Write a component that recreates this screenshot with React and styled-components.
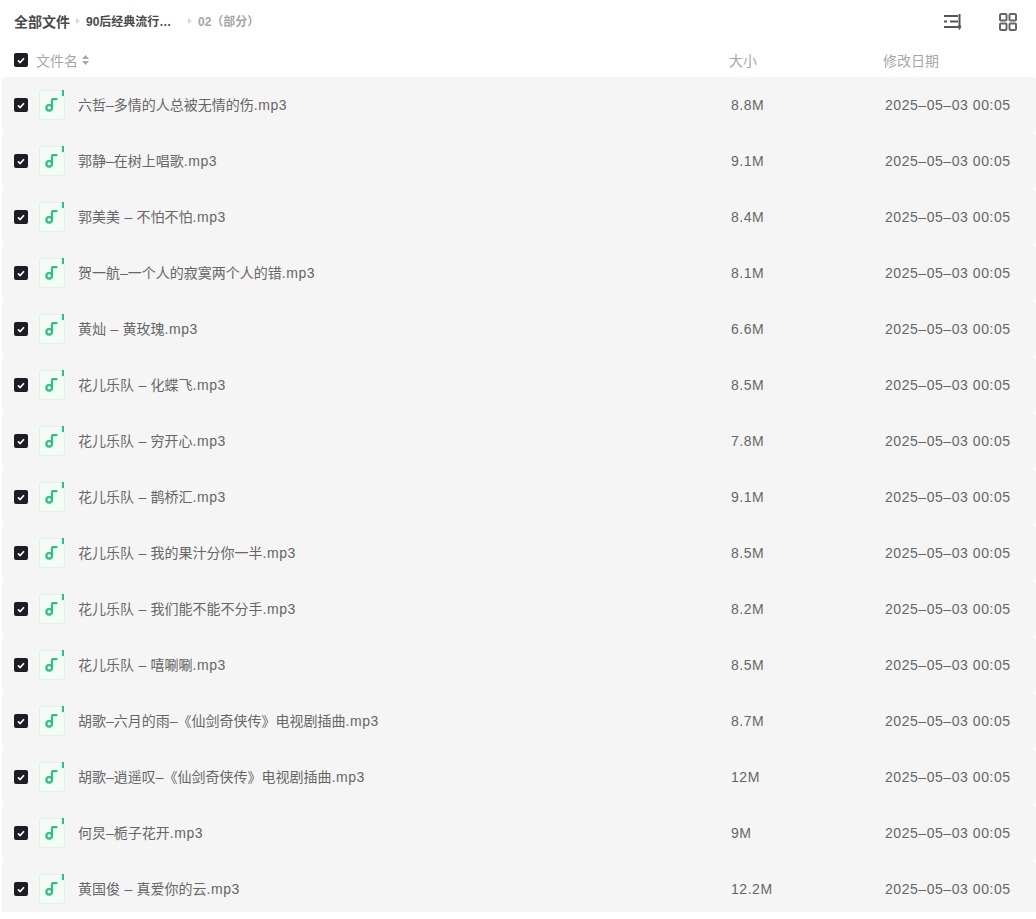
import styled, { createGlobalStyle } from "styled-components";

const GlobalStyle = createGlobalStyle`
    html, body {
        margin: 0;
        padding: 0;
        background: #fff;
        font-family: "Liberation Sans", "Noto Sans CJK SC", sans-serif;
    }
`;

const Page = styled.div`
    width: 1036px;
    height: 919px;
    overflow: hidden;
    background: #fff;
`;

const TopBar = styled.div`
    height: 43px;
    display: flex;
    align-items: center;
    padding: 0 19px 0 14px;
`;

const Crumbs = styled.div`
    flex: 1;
    display: flex;
    align-items: center;
    padding-bottom: 2px;
`;

const Crumb = styled.span`
    font-size: ${(p) => p.$size || 12}px;
    font-weight: 700;
    color: ${(p) => (p.$muted ? "#a6a6a6" : "#4a4a4a")};
    width: ${(p) => (p.$width ? p.$width + "px" : "auto")};
`;

const Arrow = styled.span`
    width: 0;
    height: 0;
    margin: 0 6px;
    border-left: 4px solid #d8d8d8;
    border-top: 3.5px solid transparent;
    border-bottom: 3.5px solid transparent;
`;

const Tools = styled.div`
    display: flex;
    align-items: center;
    gap: 36px;
`;

const HeadRow = styled.div`
    height: 34px;
    display: flex;
    align-items: center;
    padding-left: 14px;
    font-size: 14px;
    color: #a8a8a8;
`;

const Check = styled.span`
    flex: none;
    width: 14px;
    height: 14px;
    border-radius: 2px;
    background: #1d1d26;
    display: flex;
    align-items: center;
    justify-content: center;
`;

const NameHead = styled.div`
    width: 693px;
    margin-left: 8px;
    display: flex;
    align-items: center;
    gap: 4px;
`;

const SizeHead = styled.div`
    width: 154px;
`;

const List = styled.div`
    height: 835px;
    margin-left: 2px;
    overflow: hidden;
`;

const Row = styled.div`
    height: 56px;
    display: flex;
    align-items: center;
    padding-left: 12px;
    background: #f5f5f5;
    border-radius: 4px;
    font-size: 14px;
    color: #666;
`;

const FileIcon = styled.svg`
    flex: none;
    margin-left: 11px;
`;

const FileName = styled.div`
    width: 653px;
    margin: 0 0 2px 13px;
    white-space: pre;
    word-spacing: 0.5px;
`;

const Latin = styled.span`
    letter-spacing: 0.55px;
`;

const Size = styled(Latin)`
    width: 154px;
`;

const Tick = () => (
    <svg width="8" height="7" viewBox="0 0 8 7">
        <path d="M1 3.4l2.1 2.1L7 1.2" fill="none" stroke="#fff" strokeWidth="1.6" />
    </svg>
);

const Mp3Icon = () => (
    <FileIcon width="26" height="30" viewBox="0 0 26 30">
        <path d="M1.5 .5H22.5V6.5H25.5V28a1.5 1.5 0 0 1-1.5 1.5H2A1.5 1.5 0 0 1 .5 28V1.5a1 1 0 0 1 1-1z" fill="#f3fbf7" stroke="#dff2e8" />
        <rect x="23" y="0" width="2" height="6" fill="#2fbf7f" />
        <circle cx="10.2" cy="17.8" r="2.8" fill="none" stroke="#2fbf7f" strokeWidth="2.2" />
        <path d="M13 17.8V10q0-.8 .8-.8H17.5" fill="none" stroke="#2fbf7f" strokeWidth="2.2" strokeLinecap="round" />
    </FileIcon>
);

const files = [
    ["六哲–多情的人总被无情的伤", "8.8M"],
    ["郭静–在树上唱歌", "9.1M"],
    ["郭美美 – 不怕不怕", "8.4M"],
    ["贺一航–一个人的寂寞两个人的错", "8.1M"],
    ["黄灿 – 黄玫瑰", "6.6M"],
    ["花儿乐队 – 化蝶飞", "8.5M"],
    ["花儿乐队 – 穷开心", "7.8M"],
    ["花儿乐队 – 鹊桥汇", "9.1M"],
    ["花儿乐队 – 我的果汁分你一半", "8.5M"],
    ["花儿乐队 – 我们能不能不分手", "8.2M"],
    ["花儿乐队 – 嘻唰唰", "8.5M"],
    ["胡歌–六月的雨–《仙剑奇侠传》电视剧插曲", "8.7M"],
    ["胡歌–逍遥叹–《仙剑奇侠传》电视剧插曲", "12M"],
    ["何炅–栀子花开", "9M"],
    ["黄国俊 – 真爱你的云", "12.2M"],
];

const App = () => (
    <Page>
        <GlobalStyle />
        <TopBar>
            <Crumbs>
                <Crumb $size={14}>全部文件</Crumb>
                <Arrow />
                <Crumb $width={96}>90后经典流行…</Crumb>
                <Arrow />
                <Crumb $muted>02（部分）</Crumb>
            </Crumbs>
            <Tools>
                <svg width="20" height="17" viewBox="0 0 20 17" fill="none" stroke="#555" strokeWidth="2">
                    <path d="M1 3h14M1 8.500h3M7 8.500h8M1 14h14" />
                    <path d="M16.500 1v13" />
                    <path d="M15 13l1.500 3.500L18 13z" fill="#555" strokeWidth="1" />
                </svg>
                <svg width="18" height="18" viewBox="0 0 18 18" fill="none" stroke="#666" strokeWidth="2">
                    <rect x="1" y="1" width="6.500" height="6.500" rx="1" />
                    <rect x="10.500" y="1" width="6.500" height="6.500" rx="1" />
                    <rect x="1" y="10.500" width="6.500" height="6.500" rx="1" />
                    <rect x="10.500" y="10.500" width="6.500" height="6.500" rx="1" />
                </svg>
            </Tools>
        </TopBar>
        <HeadRow>
            <Check>
                <Tick />
            </Check>
            <NameHead>
                文件名
                <svg width="7" height="10" viewBox="0 0 7 10" fill="#a8a8a8">
                    <path d="M3.500 0L7 4H0zM3.500 10L0 6h7z" />
                </svg>
            </NameHead>
            <SizeHead>大小</SizeHead>
            <div>修改日期</div>
        </HeadRow>
        <List>
            {files.map(([name, size]) => (
                <Row key={name}>
                    <Check>
                        <Tick />
                    </Check>
                    <Mp3Icon />
                    <FileName>
                        {name}
                        <Latin>.mp3</Latin>
                    </FileName>
                    <Size>{size}</Size>
                    <Latin>2025–05–03 00:05</Latin>
                </Row>
            ))}
        </List>
    </Page>
);

export default App;
